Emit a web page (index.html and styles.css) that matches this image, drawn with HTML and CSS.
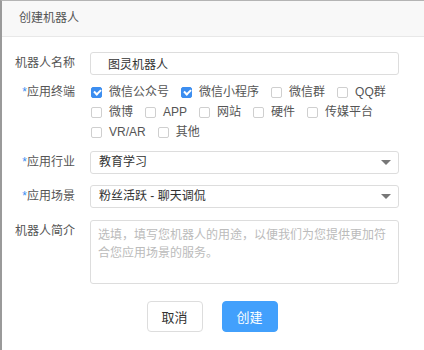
FILE: index.html
```html
<!DOCTYPE html>
<html lang="zh">
<head>
  <meta charset="UTF-8">
  <title>创建机器人</title>
  <link rel="stylesheet" href="styles.css">
</head>
<body>
  <div class="dialog">
    <div class="dialog-head">创建机器人</div>
    <form class="dialog-body">
      <div class="row row-name">
        <label class="label">机器人名称</label>
        <div class="field"><input class="input name-input" type="text" value="图灵机器人"></div>
      </div>
      <div class="row row-term">
        <label class="label"><span class="req">*</span>应用终端</label>
        <div class="field checks">
          <span class="check on"><i></i>微信公众号</span>
          <span class="check on"><i></i>微信小程序</span>
          <span class="check"><i></i>微信群</span>
          <span class="check"><i></i>QQ群</span>
          <span class="check"><i></i>微博</span>
          <span class="check"><i></i>APP</span>
          <span class="check"><i></i>网站</span>
          <span class="check"><i></i>硬件</span>
          <span class="check"><i></i>传媒平台</span>
          <span class="check"><i></i>VR/AR</span>
          <span class="check"><i></i>其他</span>
        </div>
      </div>
      <div class="row row-ind">
        <label class="label"><span class="req">*</span>应用行业</label>
        <div class="field"><div class="select">教育学习<span class="arrow"></span></div></div>
      </div>
      <div class="row row-scene">
        <label class="label"><span class="req">*</span>应用场景</label>
        <div class="field"><div class="select">粉丝活跃 - 聊天调侃<span class="arrow"></span></div></div>
      </div>
      <div class="row row-desc">
        <label class="label">机器人简介</label>
        <div class="field"><textarea class="textarea" placeholder="选填，填写您机器人的用途，以便我们为您提供更加符合您应用场景的服务。"></textarea></div>
      </div>
      <div class="actions">
        <button type="button" class="btn">取消</button>
        <button type="button" class="btn btn-primary">创建</button>
      </div>
    </form>
  </div>
</body>
</html>
```
FILE: styles.css
```css
html, body { margin: 0; padding: 0; background: #fff; }
body { font-family: "Liberation Sans", "Noto Sans CJK SC", sans-serif; font-size: 12px; color: #333; width: 424px; height: 350px; box-sizing: border-box; border-left: 2px solid #9a9a9a; border-top: 1px solid #b4b4b4; overflow: hidden; }
.dialog-head { height: 35px; line-height: 35px; padding-left: 17px; background: #f8f8f8; border-bottom: 1px solid #e8e8e8; color: #555; }
.dialog-body { margin: 0; padding-top: 15px; }
.row { display: flex; align-items: flex-start; }
.label { width: 73px; margin-right: 15px; text-align: right; color: #555; line-height: 23px; flex: none; }
.req { color: #3d8ef0; }
.field { width: 309px; }
.row-name { margin-bottom: 7px; }
.row-term { margin-bottom: 9px; }
.row-term .label { line-height: 20px; }
.row-ind { margin-bottom: 11px; }
.row-scene { margin-bottom: 12px; }
.row-desc { margin-bottom: 17px; }
.input { box-sizing: border-box; width: 100%; height: 23px; border: 1px solid #ddd; border-radius: 3px; padding: 0 0 0 17px; font: inherit; color: #333; outline: none; }
.checks { display: flex; flex-wrap: wrap; line-height: 20px; color: #555; margin-right: -6px; width: 315px; }
.check { display: inline-flex; align-items: center; margin-right: 11px; }
.check i { box-sizing: border-box; width: 11px; height: 11px; margin: 0 7px 0 1px; border: 1px solid #cfcfcf; border-radius: 2px; background: #fff; position: relative; }
.check.on i { background: #3d8ef0; border-color: #3d8ef0; }
.check.on i::after { content: ""; position: absolute; left: 2px; top: 1px; width: 5px; height: 3px; border-left: 2px solid #fff; border-bottom: 2px solid #fff; transform: rotate(-45deg); }
.select { box-sizing: border-box; height: 23px; line-height: 21px; border: 1px solid #ddd; border-radius: 3px; padding-left: 8px; position: relative; color: #333; }
.arrow { position: absolute; right: 7px; top: 8px; width: 0; height: 0; border-left: 5px solid transparent; border-right: 5px solid transparent; border-top: 5px solid #777; }
.textarea { box-sizing: border-box; display: block; width: 100%; height: 64px; border: 1px solid #ddd; border-radius: 3px; padding: 5px 7px; font: inherit; line-height: 18px; resize: none; overflow: hidden; outline: none; }
.textarea::placeholder { color: #bbb; }
.actions { display: flex; justify-content: center; gap: 19px; padding-right: 2px; }
.btn { width: 56px; height: 31px; border: 1px solid #ddd; border-radius: 4px; background: #fff; color: #333; font: inherit; font-size: 13px; padding: 0; }
.btn-primary { background: #42a0fc; border-color: #42a0fc; color: #fff; }
```
